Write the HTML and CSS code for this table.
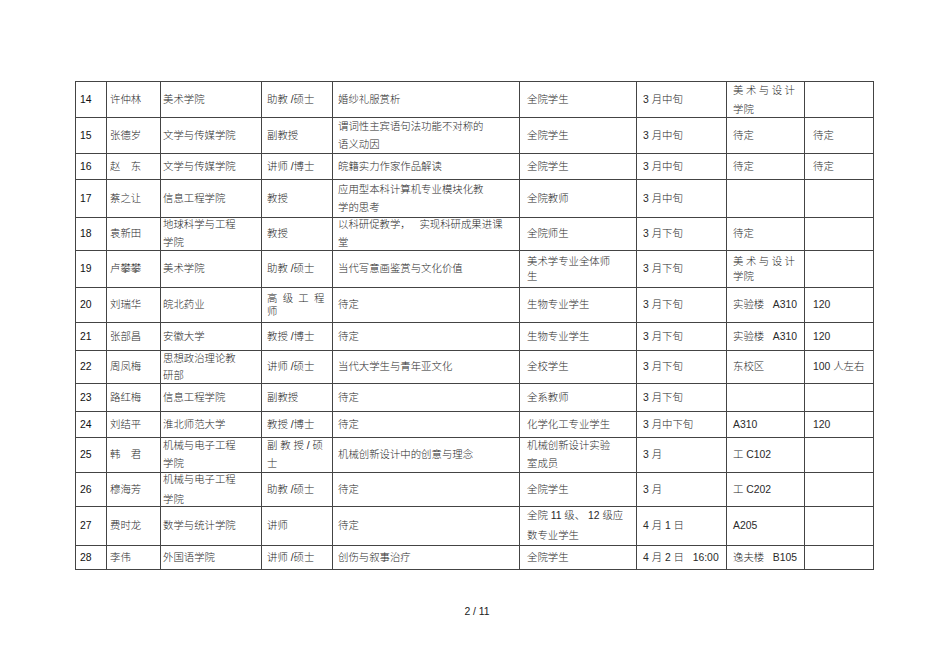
FILE: index.html
```html
<!DOCTYPE html>
<html lang="zh-CN">
<head>
<meta charset="utf-8">
<title>讲座安排</title>
<link rel="stylesheet" href="styles.css">
</head>
<body>
<div class="page">
  <div class="grid">
    <div class="c">14</div><div class="c">许仲林</div><div class="c">美术学院</div><div class="c">助教 /硕士</div><div class="c">婚纱礼服赏析</div><div class="c">全院学生</div><div class="c">3 月中旬</div><div class="c l19"><div><span class="sp">美术与设计</span><br>学院</div></div><div class="c"></div>

    <div class="c">15</div><div class="c">张德岁</div><div class="c">文学与传媒学院</div><div class="c">副教授</div><div class="c l18"><div>谓词性主宾语句法功能不对称的<br>语义动因</div></div><div class="c">全院学生</div><div class="c">3 月中旬</div><div class="c">待定</div><div class="c">待定</div>

    <div class="c">16</div><div class="c">赵　东</div><div class="c">文学与传媒学院</div><div class="c">讲师 /博士</div><div class="c">皖籍实力作家作品解读</div><div class="c">全院学生</div><div class="c">3 月中旬</div><div class="c">待定</div><div class="c">待定</div>

    <div class="c">17</div><div class="c">蔡之让</div><div class="c">信息工程学院</div><div class="c">教授</div><div class="c l18"><div>应用型本科计算机专业模块化教<br>学的思考</div></div><div class="c">全院教师</div><div class="c">3 月中旬</div><div class="c"></div><div class="c"></div>

    <div class="c">18</div><div class="c">袁新田</div><div class="c l18"><div>地球科学与工程<br>学院</div></div><div class="c">教授</div><div class="c l18"><div>以科研促教学，&nbsp;&nbsp; 实现科研成果进课<br>堂</div></div><div class="c">全院师生</div><div class="c">3 月下旬</div><div class="c">待定</div><div class="c"></div>

    <div class="c">19</div><div class="c">卢攀攀</div><div class="c">美术学院</div><div class="c">助教 /硕士</div><div class="c">当代写意画鉴赏与文化价值</div><div class="c l15"><div>美术学专业全体师<br>生</div></div><div class="c">3 月下旬</div><div class="c l15"><div><span class="sp">美术与设计</span><br>学院</div></div><div class="c"></div>

    <div class="c">20</div><div class="c">刘瑞华</div><div class="c">皖北药业</div><div class="c l13"><div><span class="sp2">高 级 工 程</span><br>师</div></div><div class="c">待定</div><div class="c">生物专业学生</div><div class="c">3 月下旬</div><div class="c">实验楼&nbsp;&nbsp; A310</div><div class="c">120</div>

    <div class="c">21</div><div class="c">张部昌</div><div class="c">安徽大学</div><div class="c">教授 /博士</div><div class="c">待定</div><div class="c">生物专业学生</div><div class="c">3 月下旬</div><div class="c">实验楼&nbsp;&nbsp; A310</div><div class="c">120</div>

    <div class="c">22</div><div class="c">周凤梅</div><div class="c l17"><div>思想政治理论教<br>研部</div></div><div class="c">讲师 /硕士</div><div class="c">当代大学生与青年亚文化</div><div class="c">全校学生</div><div class="c">3 月下旬</div><div class="c">东校区</div><div class="c">100 人左右</div>

    <div class="c">23</div><div class="c">路红梅</div><div class="c">信息工程学院</div><div class="c">副教授</div><div class="c">待定</div><div class="c">全系教师</div><div class="c">3 月下旬</div><div class="c"></div><div class="c"></div>

    <div class="c">24</div><div class="c">刘结平</div><div class="c">淮北师范大学</div><div class="c">教授 /博士</div><div class="c">待定</div><div class="c">化学化工专业学生</div><div class="c">3 月中下旬</div><div class="c">A310</div><div class="c">120</div>

    <div class="c">25</div><div class="c">韩　君</div><div class="c l18"><div>机械与电子工程<br>学院</div></div><div class="c l18"><div>副 教 授 / 硕<br>士</div></div><div class="c">机械创新设计中的创意与理念</div><div class="c l18"><div>机械创新设计实验<br>室成员</div></div><div class="c">3 月</div><div class="c">工 C102</div><div class="c"></div>

    <div class="c">26</div><div class="c">穆海芳</div><div class="c l20"><div>机械与电子工程<br>学院</div></div><div class="c">助教 /硕士</div><div class="c">待定</div><div class="c">全院学生</div><div class="c">3 月</div><div class="c">工 C202</div><div class="c"></div>

    <div class="c">27</div><div class="c">费时龙</div><div class="c">数学与统计学院</div><div class="c">讲师</div><div class="c">待定</div><div class="c l20"><div>全院 11 级、 12 级应<br>数专业学生</div></div><div class="c">4 月 1 日</div><div class="c">A205</div><div class="c"></div>

    <div class="c">28</div><div class="c">李伟</div><div class="c">外国语学院</div><div class="c">讲师 /硕士</div><div class="c">创伤与叙事治疗</div><div class="c">全院学生</div><div class="c">4 月 2 日&nbsp;&nbsp; 16:00</div><div class="c">逸夫楼&nbsp;&nbsp; B105</div><div class="c"></div>
  </div>
  <div class="pageno">2 / 11</div>
</div>
</body>
</html>
```

FILE: styles.css
```css
html, body {
  margin: 0;
  padding: 0;
  background: #ffffff;
}

.page {
  width: 950px;
  height: 672px;
  padding-top: 81px;
  box-sizing: border-box;
  font-family: "Liberation Sans", "Noto Sans CJK SC", sans-serif;
  font-size: 10.4px;
  color: #2a2a2a;
}

.grid {
  margin-left: 75px;
  width: 799px;
  display: grid;
  grid-template-columns: 31px 54px 101px 71px 187px 117px 90px 78px 69px;
  grid-template-rows: 36px 36px 26px 38px 33px 37px 35px 28px 33px 28px 26px 35px 34px 39px 24px;
  border-left: 1px solid #444;
  border-top: 1px solid #444;
  box-sizing: border-box;
}

.c {
  box-sizing: border-box;
  border-right: 1px solid #444;
  border-bottom: 1px solid #444;
  display: flex;
  align-items: center;
  white-space: nowrap;
  overflow: visible;
  line-height: 14px;
  font-weight: 300;
}

.c:nth-child(9n+1) { padding-left: 4px; color: #111; }
.c:nth-child(9n+2) { padding-left: 3px; }
.c:nth-child(9n+3) { padding-left: 2px; }
.c:nth-child(9n+4) { padding-left: 5px; }
.c:nth-child(9n+5) { padding-left: 5px; }
.c:nth-child(9n+6) { padding-left: 7px; }
.c:nth-child(9n+7) { padding-left: 6px; }
.c:nth-child(9n+8) { padding-left: 6px; }
.c:nth-child(9n+9) { padding-left: 8px; }

.l13 { line-height: 13px; }
.l15 { line-height: 15px; }
.l17 { line-height: 17px; }
.l18 { line-height: 18px; }
.l19 { line-height: 19px; }
.l20 { line-height: 20px; }

.sp { letter-spacing: 2.5px; }
.sp2 { letter-spacing: 1.2px; }

.pageno {
  margin-top: 35px;
  text-align: center;
  padding-left: 4px;
  font-size: 10.4px;
  line-height: 13px;
  color: #222;
}
```
